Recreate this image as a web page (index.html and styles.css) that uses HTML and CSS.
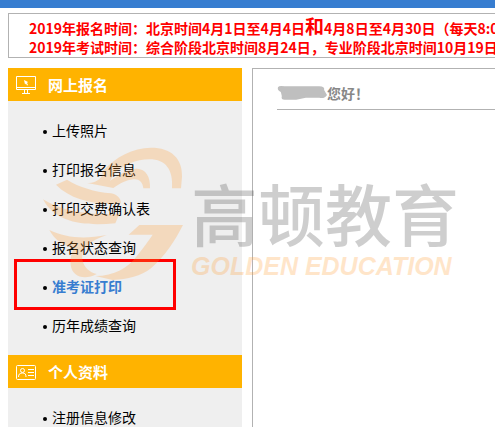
FILE: index.html
```html
<!DOCTYPE html>
<html lang="zh-CN">
<head>
<meta charset="utf-8">
<title>网上报名</title>
<link rel="stylesheet" href="styles.css">
</head>
<body>
<div class="topbar"></div>

<div class="notice">
	<p>2019年报名时间：北京时间4月1日至4月4日<span class="big">和</span>4月8日至4月30日（每天8:00-20:00）</p>
	<p>2019年考试时间：综合阶段北京时间8月24日，专业阶段北京时间10月19日-20日</p>
</div>

<div class="container">
	<nav class="sidebar">
		<h2>
			<svg class="icon" viewBox="0 0 20 18" fill="none" stroke="#fff">
				<path d="M.5.5h19v13H.5zM.5 11.5h19M8.500 14v3M11.500 14v3M6 17.500h8"/>
				<path d="M8 4l4 2-1 1 1 2-1 .5-1-2-1 1z" fill="#fff" stroke="none"/>
			</svg>
			网上报名
		</h2>
		<ul>
			<li><a href="#">上传照片</a></li>
			<li><a href="#">打印报名信息</a></li>
			<li><a href="#">打印交费确认表</a></li>
			<li><a href="#">报名状态查询</a></li>
			<li class="current"><a href="#">准考证打印</a></li>
			<li><a href="#">历年成绩查询</a></li>
		</ul>
		<h2>
			<svg class="icon" viewBox="0 0 20 18" fill="none" stroke="#fff">
				<rect x=".5" y="2.500" width="19" height="14" rx="1"/>
				<circle cx="6.500" cy="7.500" r="2"/>
				<path d="M2.500 14c0-3 1.500-4 4-4s3.500 1 3.500 4M12 6.500h6M12 9.500h6M12 12.500h6"/>
			</svg>
			个人资料
		</h2>
		<ul>
			<li><a href="#">注册信息修改</a></li>
		</ul>
	</nav>

	<main class="content">
		<p class="hello">
			<svg class="scribble" viewBox="0 0 52 16"><path d="M1 2Q2 0 8 1H44Q50 1 49 5L52 10Q50 14 44 13H30L20 15H8Q4 15 5 11L4 7Q0 5 1 2z" fill="#bfbfbf"/></svg>您好！
		</p>
	</main>
</div>

<!-- 水印 -->
<div class="watermark">
	<svg class="mark" viewBox="0 0 465 450" fill="#ff9a2e">
		<path d="M198 95C240 50 290 23 345 23C405 23 440 55 438 110L435 145H408C412 90 390 58 340 58C300 58 262 76 235 100L222 122C255 100 280 86 302 86C330 86 344 112 342 145H322C320 125 308 116 292 118C270 120 250 132 232 144L150 128C175 132 190 120 200 105z"/>
		<path d="M60 134L93 119C130 142 175 155 225 160C243 163 254 174 255 190C180 196 105 180 60 134z"/>
		<path d="M21 178C75 212 150 226 250 222L238 250C150 258 60 252 21 178z"/>
		<path d="M40 270C90 294 145 298 212 285C155 305 132 330 140 362C145 383 160 396 182 402C145 422 108 410 104 375C102 355 106 340 114 325C82 316 56 300 40 270z"/>
		<path d="M310 255H441C418 300 390 345 345 385C315 408 275 418 230 420L178 408C235 408 275 385 305 345C325 320 338 302 350 284H278z"/>
	</svg>
	<div class="brand">
		<span class="name">高顿教育</span>
		<span class="en">GOLDEN EDUCATION</span>
	</div>
</div>
</body>
</html>
```
FILE: styles.css
```css
body {
	margin: 0;
	font-family: "Noto Sans CJK SC", sans-serif;
	font-size: 14px;
	color: #000;
	overflow: hidden;
}
.topbar {
	height: 8px;
	background: #377dd0;
}
.notice {
	margin: 5px 0 10px 8px;
	padding: 5px 0 0 20px;
	border: 1px solid #b2b2b2;
	border-right: 0;
	color: #f00;
	font-weight: bold;
	white-space: nowrap;
	overflow: hidden;
}
.notice p {
	margin: 0;
	line-height: 19px;
}
.big {
	font-size: 19px;
	line-height: 1px;
}
.container {
	display: flex;
	gap: 10px;
	margin-left: 8px;
}
.sidebar {
	width: 234px;
	background: #efefef;
}
.sidebar h2 {
	display: flex;
	align-items: center;
	gap: 12px;
	margin: 0;
	padding: 0 8px;
	height: 33px;
	font-size: 15px;
	color: #fff;
	background: #ffb300;
}
.icon {
	width: 20px;
	height: 18px;
}
.sidebar ul {
	list-style: none;
	margin: 0;
	padding: 10px 0 10px 35px;
}
.sidebar li {
	position: relative;
	display: flex;
	align-items: center;
	gap: 5px;
	line-height: 39px;
}
.sidebar li::before {
	content: "";
	width: 4px;
	height: 4px;
	margin-top: 3px;
	border-radius: 50%;
	background: #000;
}
.sidebar a {
	color: #000;
	text-decoration: none;
}
.sidebar .current a {
	color: #377dd0;
	font-weight: bold;
}
/* 红框 */
.sidebar .current::after {
	content: "";
	position: absolute;
	left: -29px;
	top: -8px;
	width: 156px;
	height: 45px;
	border: 3px solid #f00;
}
.content {
	flex: 1;
	border: 1px solid #b2b2b2;
	border-right: 0;
	padding-left: 24px;
}
.hello {
	display: flex;
	align-items: center;
	height: 41px;
	padding-top: 8px;
	box-sizing: border-box;
	margin: 0;
	border-bottom: 1px solid #b2b2b2;
	color: #888;
	font-weight: bold;
}
.scribble {
	width: 50px;
	height: 16px;
}
.watermark {
	position: absolute;
	left: 36px;
	top: 140px;
	display: flex;
	opacity: .25;
	pointer-events: none;
}
.mark {
	width: 155px;
	height: 150px;
}
.brand {
	display: flex;
	flex-direction: column;
	padding-top: 32px;
	white-space: nowrap;
}
.name {
	font-size: 67px;
	line-height: 80px;
	font-weight: 500;
	color: #404040;
}
.en {
	font: italic bold 25px "Liberation Sans", Arial, sans-serif;
	color: #ff9a2e;
}
```
